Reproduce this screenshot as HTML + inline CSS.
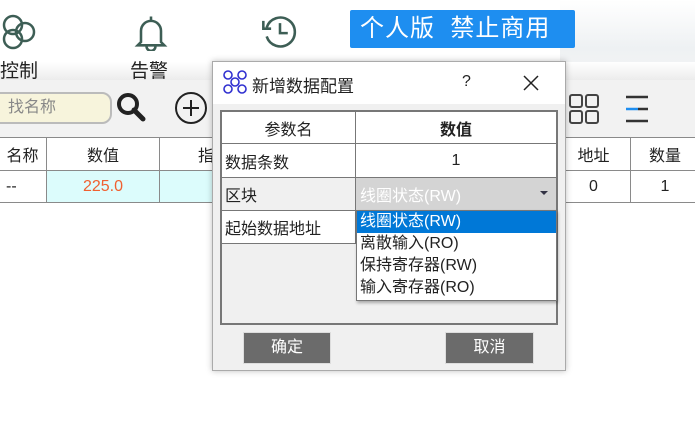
<!DOCTYPE html>
<html><head><meta charset="utf-8"><style>
*{margin:0;padding:0;box-sizing:border-box}
body{width:695px;height:421px;background:#fff;position:relative;overflow:hidden;font-family:"Liberation Sans","Noto Sans CJK SC",sans-serif;color:#222}
.a{position:absolute}
.t{font-size:16px}
.cell{position:absolute;border:1px solid #8a8a8a;display:flex;align-items:center;justify-content:center;font-size:16px}
</style></head><body>
<div class="a" style="left:560px;top:0;width:135px;height:80px;background:linear-gradient(180deg,#fff,#eef1f3 60%,#f4f4f4)"></div>
<div class="a" style="left:0;top:62px;width:695px;height:18px;background:linear-gradient(180deg,#fff,#ececec)"></div>
<svg class="a" style="left:0;top:12px" width="40" height="40" viewBox="0 0 40 40" fill="none" stroke="#3d5e55" stroke-width="2.5"><circle cx="13" cy="13" r="9"/><circle cx="13" cy="27" r="9"/><circle cx="25" cy="20" r="9"/></svg>
<div class="a t" style="left:0;top:56px;font-size:19px">控制</div>
<svg class="a" style="left:131px;top:13px" width="40" height="38" viewBox="0 0 36 34" fill="none" stroke="#3d5e55" stroke-width="2.3"><path d="M18 3v3M9 26V16a9 9 0 0 1 18 0v10l3 3H6zM14 30a4 4 0 0 0 8 0"/></svg>
<div class="a t" style="left:130px;top:56px;font-size:19px">告警</div>
<svg class="a" style="left:260px;top:12px" width="40" height="40" viewBox="0 0 36 36" fill="none" stroke="#3d5e55" stroke-width="2.3"><path d="M6 14A13 13 0 1 1 6 22"/><path d="M3 8v7h7"/><path d="M18 10v9h7"/></svg>
<div class="a" style="left:350px;top:10px;width:225px;height:38px;background:#1e8ef0;border-radius:2px;color:#fff;font-size:24px;line-height:38px;padding-left:10px;letter-spacing:1px">个人版&nbsp;&nbsp;禁止商用</div>
<div class="a" style="left:0;top:80px;width:695px;height:57px;background:#f2f2f2"></div>
<div class="a" style="left:-10px;top:92px;width:122px;height:32px;border:2px solid #bbb;border-radius:10px;background:#f7f4dc;font-size:16px;color:#888;line-height:28px;padding-left:16px">找名称</div>
<svg class="a" style="left:114px;top:90px" width="36" height="36" viewBox="0 0 36 36"><circle cx="14" cy="14" r="9" fill="none" stroke="#222" stroke-width="4"/><path d="M20 20l9 9" stroke="#222" stroke-width="5" stroke-linecap="round"/></svg>
<svg class="a" style="left:174px;top:91px" width="34" height="34" viewBox="0 0 34 34" fill="none" stroke="#222" stroke-width="2"><circle cx="17" cy="17" r="15"/><path d="M17 9v16M9 17h16"/></svg>
<svg class="a" style="left:568px;top:93px" width="34" height="32" viewBox="0 0 34 32" fill="none" stroke="#444" stroke-width="2"><rect x="2" y="2" width="12" height="12" rx="2"/><rect x="18" y="2" width="12" height="12" rx="2"/><rect x="2" y="18" width="12" height="12" rx="2"/><rect x="18" y="18" width="12" height="12" rx="2"/></svg>
<svg class="a" style="left:622px;top:93px" width="34" height="32" viewBox="0 0 34 32" stroke-width="2.5"><path d="M4 4h22M4 28h22" stroke="#333"/><path d="M4 16h12" stroke="#1e8ef0"/><path d="M16 16h10" stroke="#333"/></svg>
<div class="a" style="left:0;top:137px;width:695px;height:66px;border-top:1px solid #999;border-bottom:1px solid #999"></div>
<div class="cell" style="left:-1px;top:137px;width:48px;height:34px;border-left:none">名称</div>
<div class="cell" style="left:46px;top:137px;width:114px;height:34px">数值</div>
<div class="cell" style="left:159px;top:137px;width:60px;height:34px;justify-content:flex-start;padding-left:38px">指</div>
<div class="cell" style="left:-1px;top:170px;width:48px;height:33px;justify-content:flex-start;padding-left:6px">--</div>
<div class="cell" style="left:46px;top:170px;width:114px;height:33px;background:#dcfcfc;color:#f06030">225.0</div>
<div class="cell" style="left:159px;top:170px;width:60px;height:33px;background:#dcfcfc"></div>
<div class="cell" style="left:556px;top:137px;width:75px;height:34px">地址</div>
<div class="cell" style="left:630px;top:137px;width:70px;height:34px">数量</div>
<div class="cell" style="left:556px;top:170px;width:75px;height:33px">0</div>
<div class="cell" style="left:630px;top:170px;width:70px;height:33px">1</div>
<div class="a" style="left:212px;top:61px;width:354px;height:310px;border:1px solid #aaa;background:#f0f0f0;box-shadow:0 0 6px rgba(0,0,0,.25)"></div>
<div class="a" style="left:213px;top:62px;width:352px;height:42px;background:#fff"></div>
<svg class="a" style="left:222px;top:69px" width="26" height="26" viewBox="0 0 26 26" fill="none" stroke="#3030d0" stroke-width="1.6"><circle cx="6" cy="6" r="4"/><circle cx="20" cy="6" r="4"/><circle cx="6" cy="20" r="4"/><circle cx="20" cy="20" r="4"/><circle cx="13" cy="13" r="4"/></svg>
<div class="a" style="left:252px;top:72px;font-size:17px">新增数据配置</div>
<div class="a" style="left:462px;top:73px;font-size:16px">?</div>
<svg class="a" style="left:522px;top:74px" width="18" height="18" viewBox="0 0 18 18" stroke="#222" stroke-width="1.5"><path d="M2 2l14 14M16 2L2 16"/></svg>
<div class="a" style="left:220px;top:110px;width:338px;height:215px;border:2px solid #777;background:#f0f0f0"></div>
<div class="cell" style="left:221px;top:111px;width:135px;height:33px;background:#fff;border-color:#777">参数名</div>
<div class="cell" style="left:355px;top:111px;width:202px;height:33px;background:#fff;border-color:#777;font-weight:bold">数值</div>
<div class="cell" style="left:221px;top:143px;width:135px;height:35px;background:#fff;border-color:#777;justify-content:flex-start;padding-left:3px">数据条数</div>
<div class="cell" style="left:355px;top:143px;width:202px;height:35px;background:#fff;border-color:#777">1</div>
<div class="cell" style="left:221px;top:177px;width:135px;height:34px;background:#f0f0f0;border-color:#777;justify-content:flex-start;padding-left:3px">区块</div>
<div class="cell" style="left:355px;top:177px;width:202px;height:34px;background:#d4d4d4;border-color:#777;justify-content:flex-start;padding-left:4px;color:#fff">线圈状态(RW)</div>
<div class="a" style="left:540px;top:191px;border-left:4px solid transparent;border-right:4px solid transparent;border-top:4px solid #334"></div>
<div class="cell" style="left:221px;top:210px;width:135px;height:34px;background:#fff;border-color:#777;justify-content:flex-start;padding-left:3px">起始数据地址</div>
<div class="a" style="left:356px;top:210px;width:201px;height:91px;background:#fff;border:1px solid #777;box-shadow:1px 2px 3px rgba(0,0,0,.3);font-size:16px;line-height:22px">
<div style="background:#0078d7;color:#fff;padding-left:3px;height:22px">线圈状态(RW)</div>
<div style="padding-left:3px">离散输入(RO)</div>
<div style="padding-left:3px">保持寄存器(RW)</div>
<div style="padding-left:3px">输入寄存器(RO)</div></div>
<div class="a" style="left:243px;top:332px;width:88px;height:32px;background:#6b6b6b;border:1px solid #ddd;color:#fff;font-size:16px;text-align:center;line-height:30px">确定</div>
<div class="a" style="left:445px;top:332px;width:89px;height:32px;background:#6b6b6b;border:1px solid #ddd;color:#fff;font-size:16px;text-align:center;line-height:30px">取消</div>
</body></html>
